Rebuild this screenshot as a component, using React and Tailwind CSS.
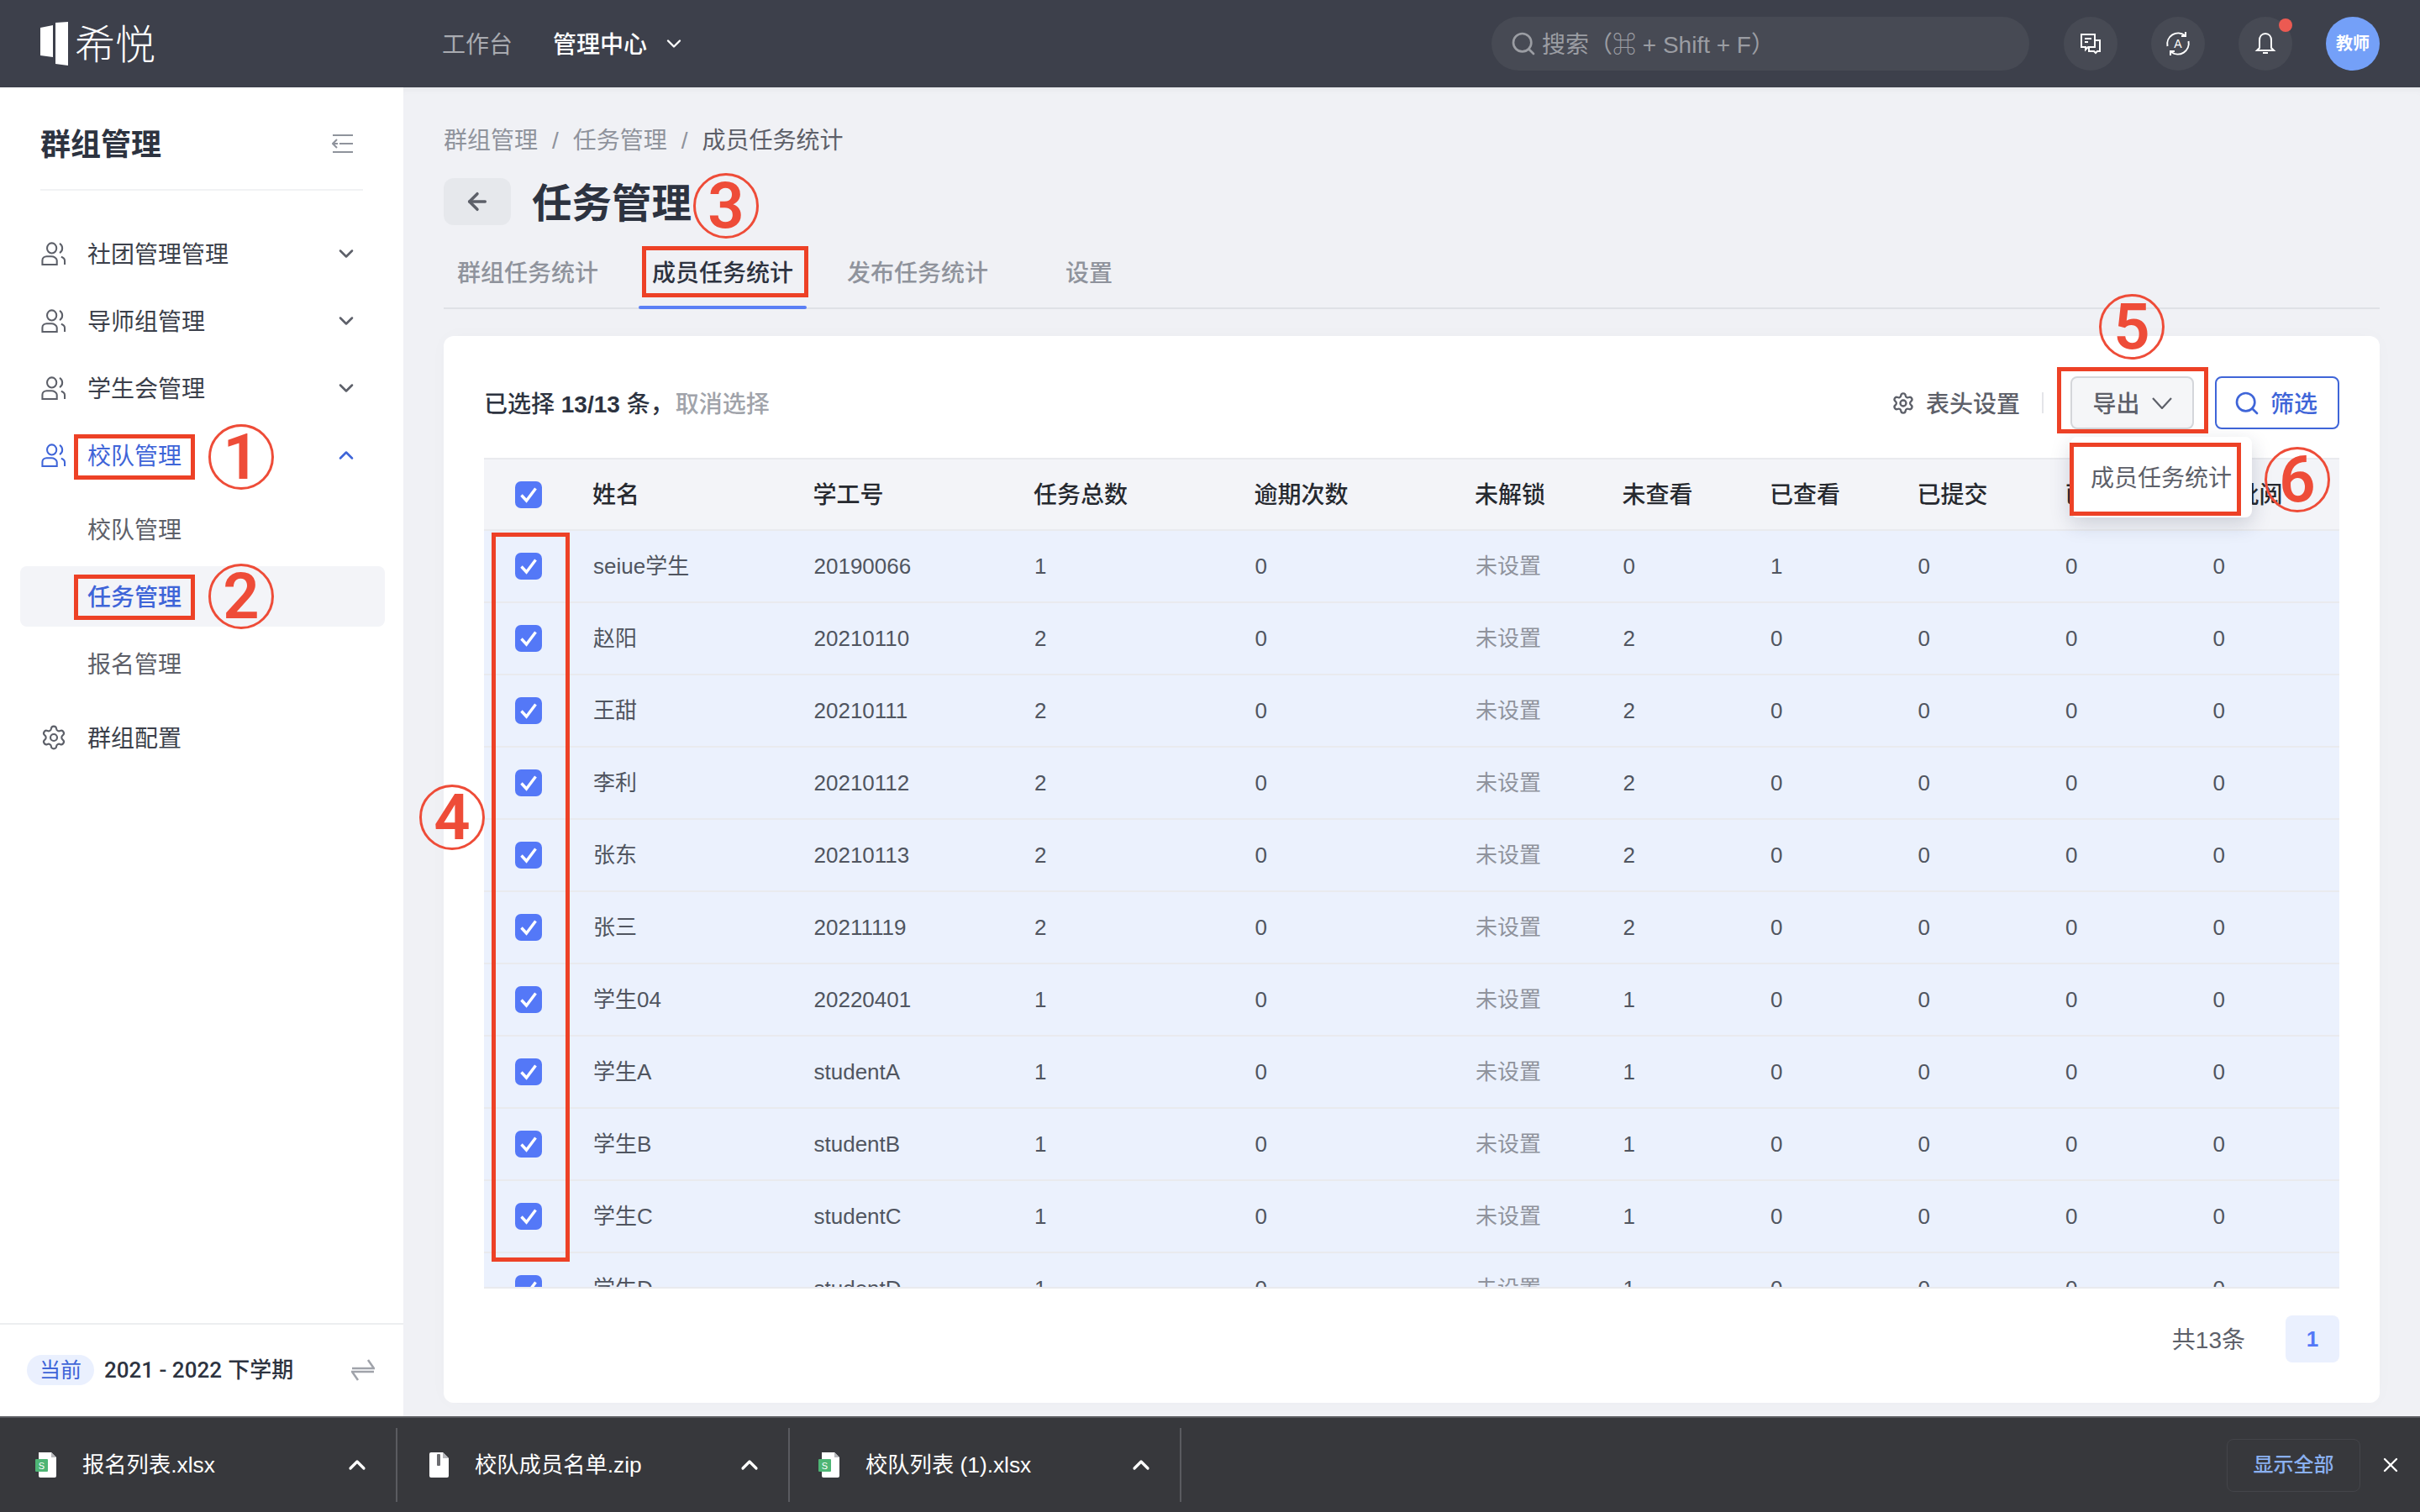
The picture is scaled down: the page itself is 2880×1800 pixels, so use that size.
import React from 'react';
import { ChevronDown, ChevronUp, Settings, Search, ArrowLeft, X } from 'lucide-react';

const rows = [
  ['seiue学生', '20190066', 1, 0, 0, 1],
  ['赵阳', '20210110', 2, 0, 2, 0],
  ['王甜', '20210111', 2, 0, 2, 0],
  ['李利', '20210112', 2, 0, 2, 0],
  ['张东', '20210113', 2, 0, 2, 0],
  ['张三', '20211119', 2, 0, 2, 0],
  ['学生04', '20220401', 1, 0, 1, 0],
  ['学生A', 'studentA', 1, 0, 1, 0],
  ['学生B', 'studentB', 1, 0, 1, 0],
  ['学生C', 'studentC', 1, 0, 1, 0],
  ['学生D', 'studentD', 1, 0, 1, 0],
];

const headers = ['姓名', '学工号', '任务总数', '逾期次数', '未解锁', '未查看', '已查看', '已提交', '已评分', '已批阅'];
const gridCols = 'grid grid-cols-[130px_262.5px_262.5px_262.5px_262.5px_175.5px_175.5px_175.5px_175.5px_175.5px_1fr] items-center';

function UsersIcon({ className }) {
  return (
    <svg viewBox="0 0 32 30" fill="none" stroke="currentColor" strokeWidth="2.2" className={className}>
      <ellipse cx="14" cy="8" rx="6" ry="6.500" />
      <path d="M24 2c2.200 1.200 3.400 3.300 3.400 6s-1.200 4.800-3.400 6" />
      <path d="M2 29v-5.500c0-3 2.500-5 5.500-5h6c3 0 7 2 7 5V29z" />
      <path d="M26 19c2.600.8 4.500 2.500 4.500 5v5" />
    </svg>
  );
}

function CollapseIcon() {
  return (
    <svg viewBox="0 0 26 24" fill="none" stroke="#8f939c" strokeWidth="2" className="mr-[11px] h-6 w-[26px]">
      <path d="M1 2h24M9 12h16M1 22h24M6 7l-5 5 5 5M1 12h6" />
    </svg>
  );
}

function Check() {
  return (
    <span className="flex h-8 w-8 items-center justify-center rounded-[7px] bg-[#5478f7]">
      <svg viewBox="0 0 20 20" fill="none" stroke="white" strokeWidth="3.400" className="h-5 w-5">
        <path d="M1.500 10.500l6 6.500L18.500 2.500" />
      </svg>
    </span>
  );
}

function ChatIcon() {
  return (
    <svg viewBox="0 0 28 28" fill="none" stroke="white" strokeWidth="2" className="h-7 w-7">
      <path d="M3 3h16v15h-8l-3 3v-3H3z" />
      <path d="M7 8h8M7 12h4" />
      <path d="M19 10h6v13h-3l-2 2-2-2h-6v-5" />
    </svg>
  );
}

function LangIcon() {
  return (
    <svg viewBox="0 0 32 32" fill="none" stroke="white" strokeWidth="2" className="h-8 w-8">
      <path d="M3.500 19A13 13 0 0 1 24 6" />
      <path d="M28.500 13A13 13 0 0 1 8 26" />
      <path d="M25 2v5h-5M7 30v-5h5" />
      <text x="16" y="21" textAnchor="middle" fontSize="14" fill="white" stroke="none" fontFamily="Liberation Sans">A</text>
    </svg>
  );
}

function BellIcon() {
  return (
    <svg viewBox="0 0 28 28" fill="none" stroke="white" strokeWidth="2" className="h-7 w-7">
      <path d="M14 2c-4.500 0-7 3.500-7 8v9l-3 3h20l-3-3v-9c0-4.500-2.500-8-7-8z" />
      <path d="M11 25h6" />
    </svg>
  );
}

function Logo() {
  return (
    <svg viewBox="0 0 33 52" fill="white" className="h-[52px] w-[33px]">
      <path d="M0 7l15-3v38L0 40z" />
      <path d="M18 1l15-1v52l-15-2z" />
    </svg>
  );
}

function SheetIcon() {
  return (
    <svg viewBox="0 0 26 30" className="h-[30px] w-[26px]">
      <path d="M4 0h15l6 6v22a2 2 0 0 1-2 2H6a2 2 0 0 1-2-2z" fill="white" />
      <path d="M19 0l6 6h-6z" fill="#b7b8bc" />
      <rect x="0" y="8" width="15" height="15" rx="1" fill="#4eb575" />
      <text x="7.500" y="20" textAnchor="middle" fontSize="11" fill="white">S</text>
    </svg>
  );
}

function ZipIcon() {
  return (
    <svg viewBox="0 0 24 30" className="h-[30px] w-6">
      <path d="M2 0h14l7 7v21a2 2 0 0 1-2 2H2a2 2 0 0 1-2-2V2a2 2 0 0 1 2-2z" fill="white" />
      <path d="M16 0l7 7h-7z" fill="#b7b8bc" />
      <rect x="9" y="2" width="4" height="14" rx="1" fill="#6b6c70" />
    </svg>
  );
}

function SwapIcon() {
  return (
    <svg viewBox="0 0 28 26" fill="none" stroke="#a0a3aa" strokeWidth="2.500" className="h-[26px] w-7">
      <path d="M1 11h26L20 1" />
      <path d="M27 15H1l7 10" />
    </svg>
  );
}

function Box({ className }) {
  return <div className={`absolute z-20 border-[5px] border-[#ed4126] ${className}`} />;
}

function Num({ children, className }) {
  return (
    <div className={`absolute z-20 flex h-[78px] w-[78px] items-center justify-center rounded-full border-[3px] border-[#ee4c38] font-['Roboto'] text-[76px] font-semibold leading-none text-[#ee4c38] ${className}`}>
      {children}
    </div>
  );
}

function MenuItem({ label, open, active }) {
  const Chevron = open ? ChevronUp : ChevronDown;
  return (
    <div className={`flex h-20 items-center pl-12 text-[28px] ${active ? 'text-[#3f65d8]' : 'text-[#3b3f4a]'}`}>
      <UsersIcon className={`h-[28px] w-[31px] ${active ? 'text-[#3f65d8]' : 'text-[#5d6069]'}`} />
      <span className="ml-[25px] pt-1">{label}</span>
      <Chevron className={`ml-auto mr-[54px] h-7 w-7 ${active ? 'text-[#3f65d8]' : 'text-[#5d6069]'}`} strokeWidth={2.2} />
    </div>
  );
}

function Sidebar() {
  return (
    <aside className="flex w-[480px] flex-col bg-white">
      <div className="mx-12 flex h-[123px] items-center justify-between border-b-2 border-[#f1f2f4] pb-[6px] pt-[18px]">
        <h2 className="pt-1 text-[36px] font-bold leading-[40px] text-[#2d3340]">群组管理</h2>
        <CollapseIcon />
      </div>
      <nav className="mt-[35px]">
        <MenuItem label="社团管理管理" />
        <MenuItem label="导师组管理" />
        <MenuItem label="学生会管理" />
        <MenuItem label="校队管理" active open />
        <div className="mt-2 text-[28px] text-[#5d6069]">
          <div className="flex h-20 items-center pl-[104px] pt-1">校队管理</div>
          <div className="flex h-20 items-center py-1">
            <div className="ml-6 mr-[22px] flex h-[72px] flex-1 items-center rounded-lg bg-[#f3f4f8] pl-20 pt-1 font-medium text-[#3f65d8]">任务管理</div>
          </div>
          <div className="flex h-20 items-center pl-[104px] pt-1">报名管理</div>
        </div>
        <div className="mt-2 flex h-20 items-center pl-12 text-[28px] text-[#3b3f4a]">
          <Settings className="h-8 w-8 text-[#5d6069]" strokeWidth={1.6} />
          <span className="ml-6 pt-1">群组配置</span>
        </div>
      </nav>
      <div className="mt-auto flex h-[111px] items-center border-t-2 border-[#eceef0] pb-[2px] pl-8">
        <span className="flex h-9 w-20 items-center justify-center rounded-full bg-[#eaf0fe] pt-[2px] text-[25px] text-[#3f65d8]">当前</span>
        <span className="ml-3 pt-[2px] text-[26px] font-medium text-[#2d3340]"><span className="font-['Roboto']">2021 - 2022</span> 下学期</span>
        <span className="ml-auto mr-[34px]"><SwapIcon /></span>
      </div>
    </aside>
  );
}

function Table() {
  return (
    <div className="h-[989px] overflow-hidden border-b-2 border-t-2 border-[#e9eaee]">
      <div className={`${gridCols} h-[85px] border-b-2 border-[#e9eaee] bg-[#f3f4f8] text-[28px] font-medium text-[#26292f]`}>
        <div className="pl-[37px]"><Check /></div>
        {headers.map((h) => <div key={h} className="-ml-[1px] pt-[2px]">{h}</div>)}
      </div>
      {rows.map((r) => (
        <div key={r[0]} className={`${gridCols} h-[86px] border-b-2 border-[#e9eaee] bg-[#ebf1fd] text-[26px] text-[#505560]`}>
          <div className="pl-[37px]"><Check /></div>
          <div>{r[0]}</div>
          <div>{r[1]}</div>
          <div>{r[2]}</div>
          <div>{r[3]}</div>
          <div className="text-[#8f939c]">未设置</div>
          <div>{r[4]}</div>
          <div>{r[5]}</div>
          <div>0</div>
          <div>0</div>
          <div>0</div>
        </div>
      ))}
    </div>
  );
}

function Main() {
  return (
    <main className="flex-1 bg-[#f0f1f5] px-12 pt-[48px] shadow-[inset_0_10px_12px_-10px_rgba(0,0,0,0.06)]">
      <div className="flex gap-[17px] text-[28px] leading-8 text-[#8f939c]">
        <span>群组管理</span><span>/</span><span>任务管理</span><span>/</span><span className="text-[#5d6069]">成员任务统计</span>
      </div>
      <div className="mt-[28px] flex h-14 items-center">
        <button className="flex h-14 w-20 items-center justify-center rounded-xl bg-[#e6e8ec]">
          <ArrowLeft className="h-8 w-8 text-[#5d6069]" strokeWidth={2.6} />
        </button>
        <h1 className="ml-[25px] pt-[6px] text-[47.5px] font-bold text-[#2d3340]">任务管理</h1>
      </div>
      <div className="mt-5 flex h-20 gap-8 border-b-2 border-[#dfe1e6] text-[28px] font-medium text-[#8f939c]">
        <div className="flex h-[72px] items-center px-4 pt-1">群组任务统计</div>
        <div className="relative flex h-20 items-start px-4 text-[#2d3340]">
          <span className="flex h-[72px] items-center pt-1">成员任务统计</span>
          <span className="absolute bottom-0 left-0 right-0 h-1 rounded-full bg-[#5b7ff5]" />
        </div>
        <div className="flex h-[72px] items-center px-4 pt-1">发布任务统计</div>
        <div className="flex h-[72px] items-center pl-[44px] pt-1">设置</div>
      </div>

      <section className="mt-8 h-[1270px] rounded-xl bg-white px-12 pt-12 shadow-[0_0_24px_rgba(30,40,70,0.02)]">
        <div className="mb-[34px] flex h-[63px] items-center">
          <div className="pt-1 text-[28px] font-medium text-[#2d3340]">
            已选择 <span className="font-bold">13/13</span> 条，<span className="ml-[2px] text-[#a0a3aa]">取消选择</span>
          </div>
          <div className="ml-auto flex items-center text-[28px] font-medium text-[#5d6069]">
            <Settings className="h-7 w-7" strokeWidth={2} />
            <span className="ml-[13px] pt-1">表头设置</span>
          </div>
          <span className="ml-[26px] h-[25px] w-[2px] bg-[#e4e5e9]" />
          <div className="relative ml-8">
            <button className="flex h-[63px] w-[147px] items-center justify-center gap-[14px] rounded-lg border-2 border-[#d4d6da] bg-[#f5f6f8] text-[28px] font-medium text-[#5d6069]">
              <span className="pt-1">导出</span>
              <svg viewBox="0 0 24 14" fill="none" stroke="currentColor" strokeWidth="2.200" className="h-[14px] w-6">
                <path d="M1 1l11 12L23 1" />
              </svg>
            </button>
            <div className="absolute left-0 top-[72px] z-10 flex h-24 w-[216px] items-center rounded-lg bg-white pl-6 pt-1 text-[28px] text-[#5d6069] shadow-[0_8px_24px_rgba(30,40,70,0.18)]">成员任务统计</div>
          </div>
          <button className="ml-[25px] flex h-[63px] w-[148px] items-center justify-center gap-3 rounded-lg border-2 border-[#3f65d8] text-[28px] font-medium text-[#3f65d8]">
            <Search className="-ml-1 h-8 w-8" strokeWidth={2} />
            <span className="pt-1">筛选</span>
          </button>
        </div>
        <Table />
        <div className="mt-8 flex h-14 items-center justify-end">
          <span className="mr-12 pt-1 text-[28px] text-[#5d6069]">共13条</span>
          <span className="flex h-14 w-16 items-center justify-center rounded-lg bg-[#eaf0fe] text-[26px] font-bold text-[#5478f7]">1</span>
        </div>
      </section>
    </main>
  );
}

function Download({ name, icon, className }) {
  return (
    <div className={`flex h-[88px] items-center border-r-2 border-[#5a5b60] ${className}`}>
      {icon}
      <span className="ml-[30px] pt-[2px] text-[26.3px] text-white">{name}</span>
      <ChevronUp className="ml-auto mr-[30px] h-8 w-8 text-white" strokeWidth={2.4} />
    </div>
  );
}

export default function App() {
  return (
    <div className="relative flex h-[1800px] w-[2880px] flex-col overflow-hidden bg-[#f0f1f5] font-['Liberation_Sans','Noto_Sans_CJK_SC',sans-serif]">
      <header className="flex h-[104px] shrink-0 items-center bg-[#3d404b] pr-12">
        <div className="flex w-[526px] items-center gap-2 pl-12 text-[48px] font-light leading-none text-white">
          <Logo />
          <span className="pt-1">希悦</span>
        </div>
        <div className="flex items-center text-[28px]">
          <span className="pt-1 text-[#a9abb1]">工作台</span>
          <span className="ml-12 pt-1 font-medium text-white">管理中心</span>
          <ChevronDown className="ml-[18px] h-7 w-7 text-white" strokeWidth={2} />
        </div>
        <div className="ml-auto flex h-16 w-[640px] items-center rounded-full bg-[#474a54] pl-[22px] text-[28px] text-[#9b9da3]">
          <Search className="h-8 w-8" strokeWidth={2} />
          <span className="ml-[6px] pt-1">搜索（⌘ + Shift + F）</span>
        </div>
        <div className="ml-[41px] flex gap-10">
          <span className="flex h-16 w-16 items-center justify-center rounded-full bg-[#474a54]"><ChatIcon /></span>
          <span className="flex h-16 w-16 items-center justify-center rounded-full bg-[#474a54]"><LangIcon /></span>
          <span className="relative flex h-16 w-16 items-center justify-center rounded-full bg-[#474a54]">
            <BellIcon />
            <span className="absolute right-0 top-[2px] h-4 w-4 rounded-full bg-[#ec5a52]" />
          </span>
          <span className="flex h-16 w-16 items-center justify-center rounded-full bg-[#74a0f8] text-[20px] font-bold text-white">教师</span>
        </div>
      </header>

      <div className="flex min-h-0 flex-1">
        <Sidebar />
        <Main />
      </div>

      <footer className="flex h-[114px] shrink-0 items-center border-t-2 border-[#5a5b60] bg-[#37383c] text-[26px]">
        <Download className="w-[473px] pl-[42px]" name="报名列表.xlsx" icon={<SheetIcon />} />
        <Download className="w-[467px] pl-[38px]" name="校队成员名单.zip" icon={<ZipIcon />} />
        <Download className="w-[466px] pl-[34px]" name="校队列表 (1).xlsx" icon={<SheetIcon />} />
        <span className="ml-auto flex h-[63px] w-[159px] items-center justify-center rounded-lg border border-[#44454a] text-[24px] font-medium text-[#8ab0f0]">显示全部</span>
        <X className="ml-[22px] mr-[21px] h-7 w-7 text-white" strokeWidth={2} />
      </footer>

      <Box className="left-[88px] top-[517px] h-[54px] w-[144px]" />
      <Box className="left-[88px] top-[684px] h-[54px] w-[144px]" />
      <Box className="left-[764px] top-[293px] h-[61px] w-[198px]" />
      <Box className="left-[585px] top-[634px] h-[868px] w-[93px]" />
      <Box className="left-[2448px] top-[437px] h-[79px] w-[180px]" />
      <Box className="left-[2463px] top-[527px] h-[87px] w-[204px]" />

      <Num className="left-[248px] top-[505px]">1</Num>
      <Num className="left-[248px] top-[671px]">2</Num>
      <Num className="left-[825px] top-[206px]">3</Num>
      <Num className="left-[499px] top-[934px]">4</Num>
      <Num className="left-[2498px] top-[350px]">5</Num>
      <Num className="left-[2695px] top-[532px]">6</Num>
    </div>
  );
}
